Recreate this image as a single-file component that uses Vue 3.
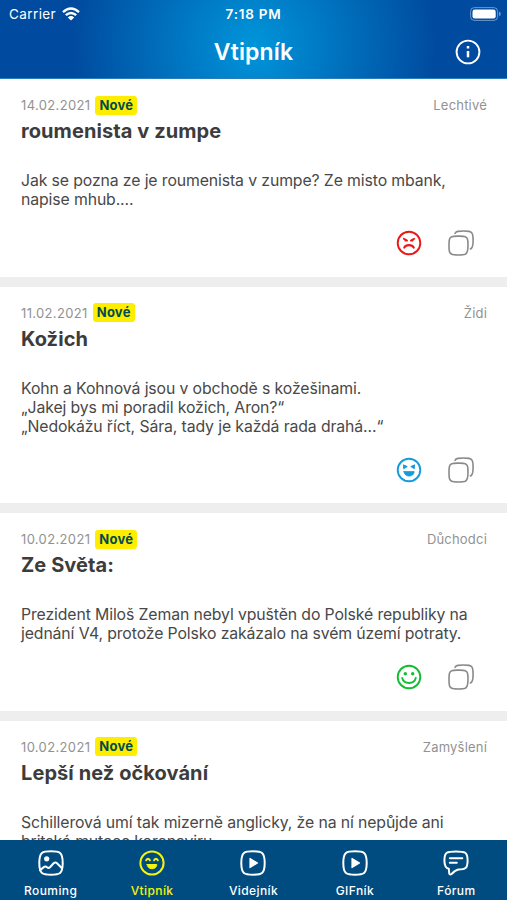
<script setup>
const jokes = [
  {
    date: '14.02.2021', category: 'Lechtivé', title: 'roumenista v zumpe', mood: 'angry',
    lines: ['Jak se pozna ze je roumenista v zumpe? Ze misto mbank,', 'napise mhub....'],
  },
  {
    date: '11.02.2021', category: 'Židi', title: 'Kožich', mood: 'laugh',
    lines: ['Kohn a Kohnová jsou v obchodě s kožešinami.', '„Jakej bys mi poradil kožich, Aron?“', '„Nedokážu říct, Sára, tady je každá rada drahá...“'],
  },
  {
    date: '10.02.2021', category: 'Důchodci', title: 'Ze Světa:', mood: 'smile',
    lines: ['Prezident Miloš Zeman nebyl vpuštěn do Polské republiky na', 'jednání V4, protože Polsko zakázalo na svém území potraty.'],
  },
  {
    date: '10.02.2021', category: 'Zamyšlení', title: 'Lepší než očkování', mood: 'smile',
    lines: ['Schillerová umí tak mizerně anglicky, že na ní nepůjde ani', 'britská mutace koronaviru.'],
  },
]
const tabs = [
  { label: 'Rouming', icon: 'image' },
  { label: 'Vtipník', icon: 'face', active: true },
  { label: 'Videjník', icon: 'play' },
  { label: 'GIFník', icon: 'play' },
  { label: 'Fórum', icon: 'chat' },
]
</script>

<template>
  <div class="app">
    <header class="header">
      <div class="status">
        <div class="carrier">
          <span>Carrier</span>
          <svg class="wifi" viewBox="0 0 18 14" fill="none" stroke="#fff" stroke-width="2.4">
            <path d="M1 5.2Q9-2 17 5.2" />
            <path d="M3.8 8.2Q9 3.7 14.2 8.2" />
            <path d="M9 13.6 5.8 10.4Q9 7.8 12.2 10.4Z" fill="#fff" stroke="none" />
          </svg>
        </div>
        <div class="time">7:18 PM</div>
        <div class="battery-wrap">
          <svg class="battery" viewBox="0 0 31 14">
            <rect x=".6" y=".6" width="27" height="12.8" rx="3.8" fill="none" stroke="#fff" stroke-opacity=".42" />
            <rect x="2.5" y="2.5" width="23.2" height="9" rx="2.2" fill="#fff" />
            <path d="M29 4.8Q30.8 5.4 30.8 7T29 9.2Z" fill="#fff" fill-opacity=".45" />
          </svg>
        </div>
      </div>
      <div class="navbar">
        <span></span>
        <h1>Vtipník</h1>
        <svg class="info" viewBox="0 0 26 26" fill="none" stroke="#fff" stroke-width="1.9">
          <circle cx="13" cy="13" r="11.4" />
          <path d="M13 12v6.3" stroke-width="2.5" />
          <path d="M13 7v2.5" stroke-width="2.5" />
        </svg>
      </div>
    </header>

    <main class="feed">
      <article v-for="joke in jokes" :key="joke.title" class="card">
        <div class="meta">
          <span class="date">{{ joke.date }}</span>
          <span class="badge">Nové</span>
          <span class="category">{{ joke.category }}</span>
        </div>
        <h2>{{ joke.title }}</h2>
        <div class="body">
          <p v-for="line in joke.lines" :key="line">{{ line }}</p>
        </div>
        <div class="actions">
          <svg class="mood" :class="joke.mood" viewBox="0 0 26 26" fill="none" stroke="currentColor" stroke-width="1.9" stroke-linecap="round">
            <circle cx="13" cy="13" r="11.3" />
            <template v-if="joke.mood === 'angry'">
              <path d="M7.8 8.8 11.1 10.6M18.2 8.8 14.9 10.6" stroke-width="1.8" />
              <path d="M9.3 10.6h.5M16.2 10.6h.5" stroke-width="1.8" />
              <path d="M8.2 17.6C9.8 14.3 16.2 14.3 17.8 17.6" stroke-width="2.1" />
            </template>
            <template v-else-if="joke.mood === 'laugh'">
              <path d="M7.8 8 11.2 9.6 8 11.5ZM18.2 8 14.8 9.6 18 11.5Z" fill="currentColor" stroke-width="1" />
              <path d="M8 14.6h10.2c-.2 6-10 6-10.2 0Z" fill="currentColor" stroke-width=".8" />
            </template>
            <template v-else>
              <circle cx="9.3" cy="9.8" r="1.7" fill="currentColor" stroke="none" />
              <circle cx="16.7" cy="9.8" r="1.7" fill="currentColor" stroke="none" />
              <path d="M6.2 13.9C8 20.6 18 20.6 19.8 13.9" />
            </template>
          </svg>
          <svg class="copy" viewBox="0 0 26 26" fill="none" stroke="#8a8a8a" stroke-width="1.6" stroke-linecap="round">
            <path d="M10.5 6.1C13.5 6.1 15.8 6 17.3 6.7 19.8 7.8 20 10 20 15.5S19.6 23 17.3 24.3C15.5 25.2 5.5 25.2 3.7 24.3 1.2 23 1 21 1 15.5S1.2 7.8 3.7 6.7C5.2 6 7.5 6.1 10.5 6.1Z" />
            <path d="M7 3.3C8.3 1 10.5 1 15.5 1 20.5 1 22.5 1 24 3.2 25.4 5.5 25.6 15.5 23.8 17.7Q23.2 18.6 22.4 19" />
          </svg>
        </div>
      </article>
    </main>

    <nav class="tabs">
      <div v-for="tab in tabs" :key="tab.label" class="tab" :class="{ active: tab.active }">
        <svg viewBox="0 0 26 26" fill="none" stroke="currentColor" stroke-width="2" stroke-linecap="round" stroke-linejoin="round">
          <template v-if="tab.icon === 'image'">
            <path d="M13 1.3C21.5 1.3 24.7 2 24.7 13S21.5 24.7 13 24.7 1.3 24 1.3 13 4.5 1.3 13 1.3Z" />
            <circle cx="8.7" cy="8.8" r="2.6" fill="currentColor" stroke="none" />
            <path d="M2 20.2 5.5 17.4Q7.4 15.9 9 17.2 10.6 18.6 12 17.2L15.6 13.3Q17.4 11.7 19 13.2L24 18.2" />
          </template>
          <template v-else-if="tab.icon === 'face'">
            <circle cx="13" cy="13" r="11.6" />
            <path d="M7.2 10.3Q9 7.4 10.9 10.3M15.1 10.3Q17 7.4 18.8 10.3" />
            <path d="M8.2 14.5h9.6c-.2 5.8-9.4 5.8-9.6 0Z" fill="currentColor" stroke-width="1" />
          </template>
          <template v-else-if="tab.icon === 'play'">
            <path d="M13 1.3C21.5 1.3 24.7 2 24.7 13S21.5 24.7 13 24.7 1.3 24 1.3 13 4.5 1.3 13 1.3Z" />
            <path d="M10 8.4 17.5 13 10 17.6Z" fill="currentColor" stroke-width="1.2" />
          </template>
          <template v-else>
            <path d="M13 1.4C22 1.4 24.6 2 24.6 10.4S22 19.4 15.5 19.6Q12.5 20.2 8.6 24 6.6 25.3 6.2 23L5.8 18.8C2.5 18 1.4 15.5 1.4 10.4 1.4 2 4 1.4 13 1.4Z" />
            <path d="M6.8 8.2h12.5M6.8 12.8h7" />
          </template>
        </svg>
        <span>{{ tab.label }}</span>
      </div>
    </nav>
  </div>
</template>

<style>
body { margin: 0; }
</style>

<style scoped>
.app {
  display: flex;
  flex-direction: column;
  height: 900px;
  overflow: hidden;
  background: #fff;
  color: #484848;
  font-family: Inter, "Liberation Sans", sans-serif;
}
h1, h2, p { margin: 0; }
.header {
  flex: none;
  box-sizing: border-box;
  height: 79px;
  color: #fff;
  background: radial-gradient(circle at 254px 46px, #0095da 0, #004b9f 181px);
  border-bottom: 1px solid #287fc0;
}
.status {
  display: grid;
  grid-template-columns: 1fr auto 1fr;
  align-items: center;
  height: 27px;
  padding: 0 6px 0 9px;
  font-size: 13.5px;
}
.carrier { display: flex; align-items: center; gap: 6px; letter-spacing: .4px; }
.wifi { width: 18px; height: 14px; }
.time { font-weight: 600; font-size: 13.5px; letter-spacing: .75px; margin-right: 3px; }
.battery-wrap { display: flex; justify-content: flex-end; }
.battery { width: 31px; height: 14px; }
.navbar {
  display: grid;
  grid-template-columns: 1fr auto 1fr;
  align-items: center;
  height: 49px;
  padding: 0 26px;
}
h1 { font-size: 23px; line-height: 28px; font-weight: 600; letter-spacing: .15px; }
.info { width: 26px; height: 26px; justify-self: end; }
.feed { flex: 1; min-height: 0; overflow: hidden; }
.card { padding: 16px 20px 20.6px 21px; border-bottom: 10px solid #eee; }
.meta { display: flex; align-items: center; height: 20px; font-size: 13px; color: #929292; }
.date { letter-spacing: .35px; }
.badge {
  margin-left: 5px;
  padding: 0 4px;
  border-radius: 3px;
  background: #ffed00;
  color: #004b50;
  font-weight: 700;
  line-height: 19px;
  letter-spacing: .25px;
}
.category { margin-left: auto; letter-spacing: .2px; }
h2 { margin-top: 3px; font-size: 20px; line-height: 26px; font-weight: 700; letter-spacing: .08px; color: #3c3c3c; }
.body { margin-top: 27px; font-size: 15.8px; line-height: 19px; letter-spacing: -.11px; white-space: nowrap; }
.actions { display: flex; justify-content: flex-end; gap: 26px; margin-top: 21px; padding-right: 13px; }
.actions svg { width: 26px; height: 26px; }
.angry { color: #ec1717; }
.laugh { color: #149bdb; }
.smile { color: #13bd31; }
.tabs {
  flex: none;
  display: grid;
  grid-template-columns: repeat(5, 1fr);
  height: 60px;
  background: #004b80;
  color: #fff;
}
.tab { display: flex; flex-direction: column; align-items: center; padding-top: 10px; font-size: 12px; font-weight: 500; }
.tab svg { width: 26px; height: 26px; }
.tab span { margin-top: 7px; line-height: 16px; letter-spacing: .4px; }
.tab.active { color: #f4f40d; }
</style>
